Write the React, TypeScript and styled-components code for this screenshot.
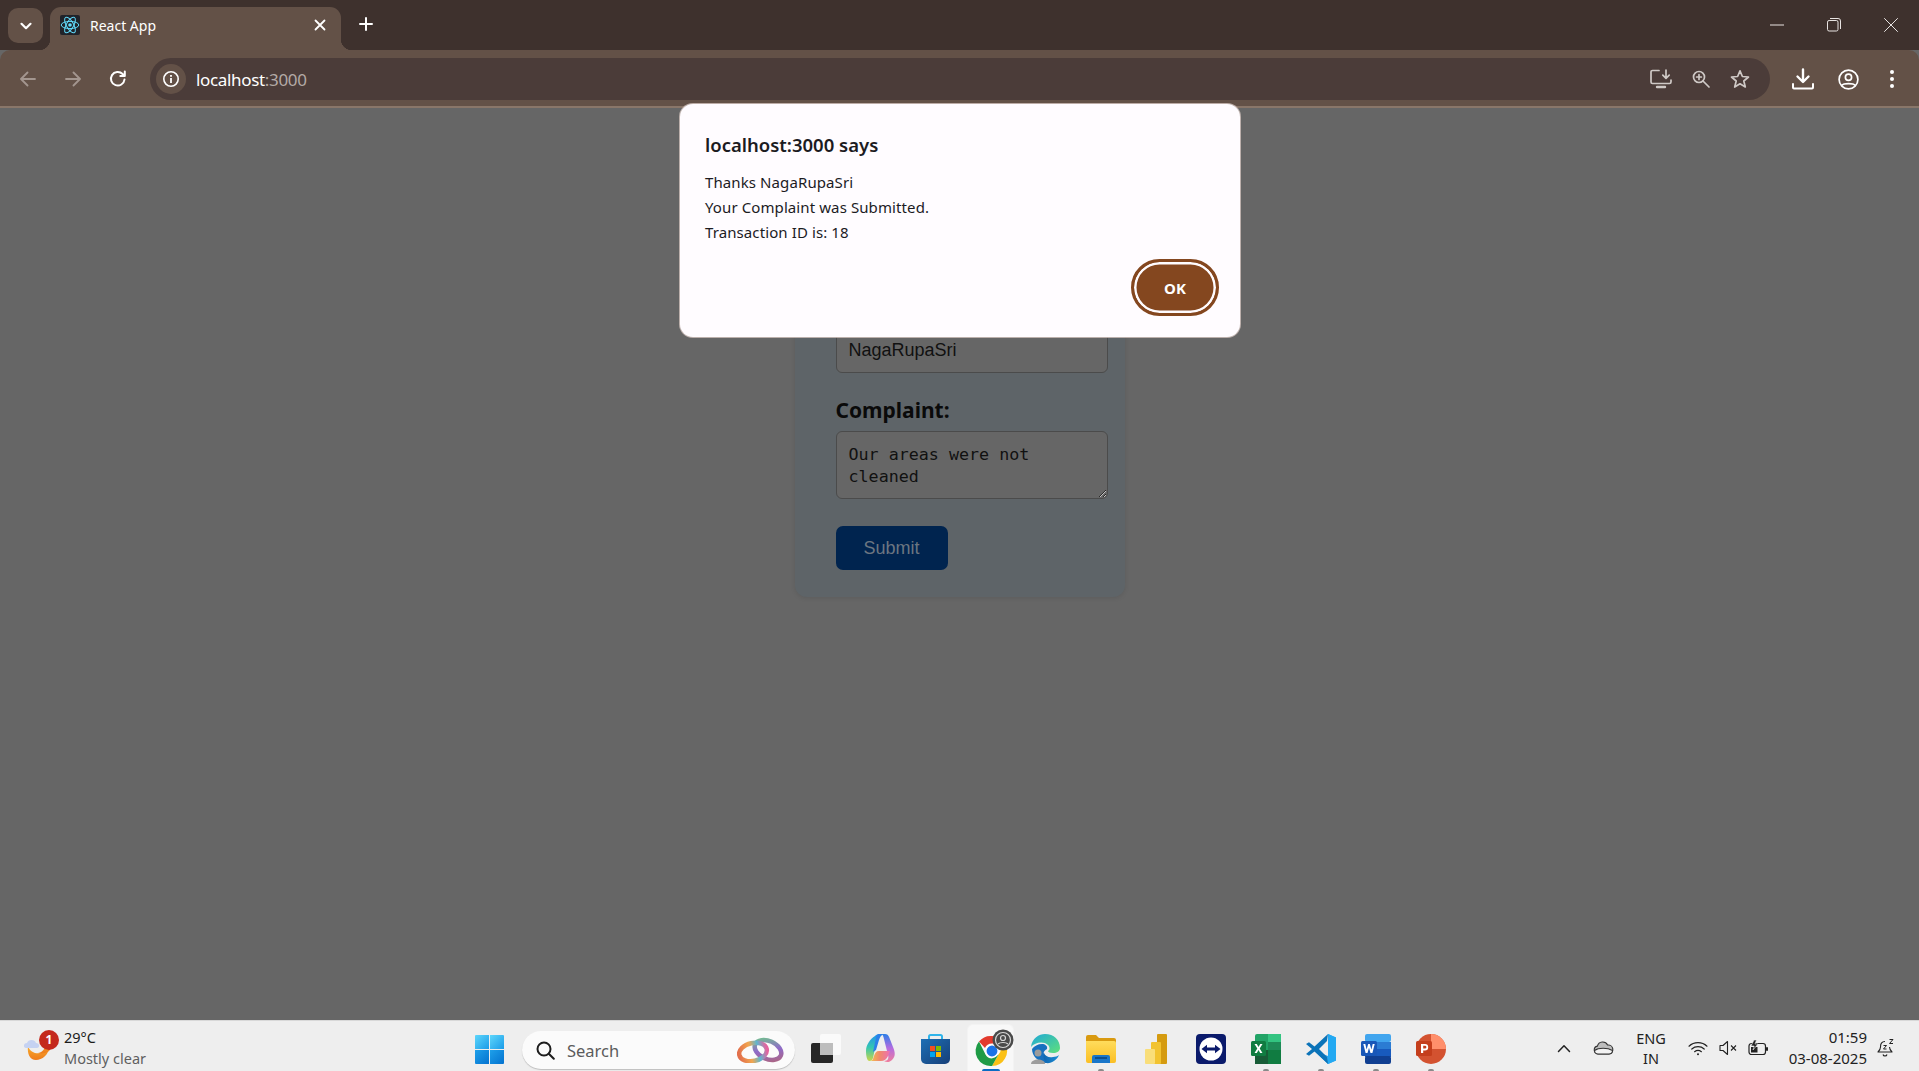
import React from "react";
import styled, { createGlobalStyle } from "styled-components";

const Global = createGlobalStyle`
  html, body { margin: 0; padding: 0; background: #666; overflow: hidden; }
  * { box-sizing: border-box; }
`;

const UI = `"Noto Sans", "Open Sans", sans-serif`;

const Page = styled.div`
  position: relative;
  width: 1919px;
  height: 1071px;
  display: flex;
  flex-direction: column;
  overflow: hidden;
  font-family: ${UI};
`;

/* ---------- browser chrome ---------- */
const TabStrip = styled.div`
  height: 50px;
  flex: none;
  background: #3e312d;
  display: flex;
  align-items: flex-start;
  padding: 7px 0 0 8px;
  color: #fff;
`;
const TabSearch = styled.div`
  width: 35px;
  height: 35px;
  margin-top: 1px;
  border-radius: 10px;
  background: #635147;
  display: flex;
  align-items: center;
  justify-content: center;
`;
const Tab = styled.div`
  position: relative;
  width: 291px;
  height: 43px;
  margin-left: 7px;
  padding: 0 15px 7px 10px;
  background: #635147;
  border-radius: 11px 11px 0 0;
  display: flex;
  align-items: center;
  gap: 10px;
  &::before, &::after {
    content: "";
    position: absolute;
    bottom: 0;
    width: 11px;
    height: 11px;
  }
  &::before { left: -11px; background: radial-gradient(circle at 0 0, transparent 11px, #635147 11.5px); }
  &::after { right: -11px; background: radial-gradient(circle at 100% 0, transparent 11px, #635147 11.5px); }
`;
const TabTitle = styled.span`
  flex: 1;
  font-size: 14px;
  color: #fff;
`;
const NewTab = styled.div`
  margin: 4px 0 0 13px;
  width: 24px;
  height: 26px;
  display: flex;
  align-items: center;
  justify-content: center;
`;
const WindowControls = styled.div`
  margin-left: auto;
  display: flex;
  height: 36px;
  align-items: center;
`;
const WinButton = styled.div`
  width: 57px;
  display: flex;
  justify-content: center;
`;
const Toolbar = styled.div`
  height: 58px;
  flex: none;
  background: #635147;
  border-bottom: 2px solid #897669;
  border-radius: 10px 10px 0 0;
  display: flex;
  align-items: flex-start;
  padding-top: 8px;
`;
const NavButton = styled.div<{ $w?: number }>`
  width: ${(p) => p.$w ?? 45}px;
  height: 42px;
  display: flex;
  align-items: center;
  justify-content: center;
`;
const NavGroup = styled.div`
  display: flex;
  width: 150px;
  padding-left: 5px;
`;
const Omnibox = styled.div`
  width: 1620px;
  height: 42px;
  border-radius: 21px;
  background: #4b3c39;
  display: flex;
  align-items: center;
  padding: 0 20px 0 6px;
`;
const InfoChip = styled.div`
  width: 30px;
  height: 30px;
  border-radius: 50%;
  background: #635147;
  display: flex;
  align-items: center;
  justify-content: center;
`;
const Url = styled.div`
  margin-left: 10px;
  flex: 1;
  font-size: 17px;
  letter-spacing: -0.33px;
  color: #fff;
  span { color: #b3aaa6; }
`;
const OmniIcons = styled.div`
  display: flex;
  align-items: center;
  gap: 20px;
`;
const ToolIcons = styled.div`
  display: flex;
  align-items: center;
  margin-left: 9px;
`;

/* ---------- page content ---------- */
const Main = styled.main`
  flex: 1;
  background: #666666;
  display: flex;
  justify-content: center;
  align-items: flex-start;
  padding-top: 164px;
`;
const Card = styled.form`
  width: 330px;
  padding: 21px 17px 27px 41px;
  background: #5e6468;
  border-radius: 12px;
  box-shadow: 0 1px 5px rgba(0, 0, 0, 0.1);
  display: flex;
  flex-direction: column;
  align-items: flex-start;
`;
const Field = styled.div<{ $mb: number }>`
  width: 100%;
  display: flex;
  flex-direction: column;
  gap: 8px;
  margin-bottom: ${(p) => p.$mb}px;
`;
const Label = styled.label`
  height: 26px;
  line-height: 26px;
  font-size: 21px;
  font-weight: 700;
  color: #0a0a0a;
`;
const TextInput = styled.input`
  width: 100%;
  height: 46px;
  padding: 0 12px;
  border: 1px solid #4b4b4b;
  border-radius: 6px;
  background: #666666;
  color: #111;
  font: 18px "Liberation Sans", Arial, sans-serif;
  outline: none;
`;
const TextArea = styled.textarea`
  width: 100%;
  height: 68px;
  padding: 11px 11px 10px 12px;
  border: 1px solid #4b4b4b;
  border-radius: 6px;
  background: #666666;
  color: #111;
  font: 16.7px/22px "DejaVu Sans Mono", monospace;
  outline: none;
  display: block;
`;
const Submit = styled.button`
  width: 112px;
  height: 44px;
  margin-top: -1px;
  border: 0;
  border-radius: 7px;
  background: #00244f;
  color: #6c7681;
  font: 18px "Liberation Sans", Arial, sans-serif;
`;

/* ---------- alert dialog ---------- */
const Dialog = styled.div`
  position: absolute;
  left: 680px;
  top: 104px;
  width: 560px;
  height: 233px;
  padding: 26px 21px 21px 25px;
  background: #fffcff;
  border-radius: 13px;
  box-shadow: 0 0 0 1px rgba(210, 195, 190, 0.8);
  display: flex;
  flex-direction: column;
  color: #1c1b1f;
`;
const DialogTitle = styled.div`
  height: 30px;
  line-height: 30px;
  font-size: 18.5px;
  font-weight: 600;
`;
const DialogBody = styled.div`
  margin-top: 10px;
  font-size: 15px;
  line-height: 25px;
  letter-spacing: 0.1px;
`;
const DialogActions = styled.div`
  margin-top: auto;
  display: flex;
  justify-content: flex-end;
`;
const OkButton = styled.button`
  width: 88px;
  height: 57px;
  border-radius: 29px;
  border: 3px solid #84471f;
  padding: 0;
  background: #84471f;
  box-shadow: inset 0 0 0 2.5px #fffcff;
  color: #fff;
  font: 700 15px ${UI};
`;

/* ---------- taskbar ---------- */
const Taskbar = styled.footer`
  height: 51px;
  flex: none;
  background: #eeeeee;
  border-top: 1px solid #d8d8d8;
  display: flex;
  align-items: stretch;
  color: #1b1b1b;
`;
const Weather = styled.div`
  width: 462px;
  flex: none;
  display: flex;
  align-items: center;
  padding: 4px 0 0 24px;
  gap: 2px;
`;
const WeatherIcon = styled.div`
  position: relative;
  width: 38px;
  height: 34px;
`;
const Badge = styled.span`
  position: absolute;
  left: 15px;
  top: -1px;
  width: 20px;
  height: 20px;
  border-radius: 50%;
  background: #c4281c;
  color: #fff;
  font-size: 12px;
  font-weight: 700;
  line-height: 20px;
  text-align: center;
`;
const WeatherText = styled.div`
  font-size: 14.5px;
  line-height: 21px;
  small { display: block; font-size: 14.5px; color: #5f5f5f; }
`;
const Tile = styled.div<{ $active?: boolean; $dot?: boolean }>`
  position: relative;
  width: 55px;
  flex: none;
  padding-top: 6px;
  display: flex;
  align-items: center;
  justify-content: center;
  &::before {
    content: "";
    display: ${(p) => (p.$active ? "block" : "none")};
    position: absolute;
    left: 5px;
    right: 5px;
    top: 4px;
    bottom: 0;
    background: #f8f8f8;
    border-radius: 5px 5px 0 0;
    box-shadow: 0 0 0 1px #f3f3f3;
  }
  &::after {
    content: "";
    display: ${(p) => (p.$active || p.$dot ? "block" : "none")};
    position: absolute;
    bottom: 0;
    left: 50%;
    transform: translateX(-50%);
    width: ${(p) => (p.$active ? 18 : 6)}px;
    height: 2px;
    border-radius: 2px 2px 0 0;
    background: ${(p) => (p.$active ? "#0a6cc4" : "#8a8a8a")};
  }
  svg { position: relative; z-index: 1; }
`;
const SearchBox = styled.div`
  width: 273px;
  height: 38px;
  flex: none;
  margin: 10px 3px 0 5px;
  border-radius: 19px;
  background: #fbfbfb;
  box-shadow: 0 1px 1px rgba(0, 0, 0, 0.2);
  display: flex;
  align-items: center;
  padding: 0 10px 0 14px;
  font-size: 16.5px;
  color: #5c5c5c;
  gap: 12px;
`;
const SearchText = styled.span`
  flex: 1;
`;
const Tray = styled.div`
  margin-left: auto;
  display: flex;
  align-items: center;
  padding: 4px 14px 0 0;
`;
const TrayItem = styled.div<{ $w: number }>`
  width: ${(p) => p.$w}px;
  display: flex;
  justify-content: center;
  align-items: center;
`;
const Lang = styled.div`
  font-size: 14.5px;
  line-height: 20px;
  text-align: center;
  color: #222;
`;
const Clock = styled.div`
  width: 90px;
  font-size: 15px;
  line-height: 21px;
  text-align: right;
  color: #222;
`;

/* ---------- drawings ---------- */
const Chevron = () => (
  <svg width="14" height="14" viewBox="0 0 14 14" fill="none" stroke="#fff" strokeWidth="2.2" strokeLinecap="round" strokeLinejoin="round"><path d="M2.5 4.8 7 9.2l4.5-4.4" /></svg>
);
const Favicon = () => (
  <svg width="20" height="20" viewBox="0 0 20 20">
    <rect width="20" height="20" rx="2" fill="#20232a" />
    <g fill="none" stroke="#61dafb" strokeWidth="1">
      <ellipse cx="10" cy="10" rx="8.8" ry="3.6" />
      <ellipse cx="10" cy="10" rx="8.8" ry="3.6" transform="rotate(60 10 10)" />
      <ellipse cx="10" cy="10" rx="8.8" ry="3.6" transform="rotate(120 10 10)" />
    </g>
    <circle cx="10" cy="10" r="1.8" fill="#61dafb" />
  </svg>
);
const Line = ({ d, w = 16, h = 16, c = "#fff", sw = 1.8, vb }: { d: string; w?: number; h?: number; c?: string; sw?: number; vb?: string }) => (
  <svg width={w} height={h} viewBox={vb ?? `0 0 ${w} ${h}`} fill="none" stroke={c} strokeWidth={sw} strokeLinecap="round" strokeLinejoin="round"><path d={d} /></svg>
);
const Restore = () => (
  <svg width="14" height="14" viewBox="0 0 14 14" fill="none" stroke="#e8e4e2" strokeWidth="1"><rect x="0.5" y="2.5" width="10.5" height="10.5" rx="1.6" /><path d="M3 .5h8a2.4 2.4 0 0 1 2.5 2.5v8" /></svg>
);
const Info = () => (
  <svg width="18" height="18" viewBox="0 0 18 18"><circle cx="9" cy="9" r="7.2" fill="none" stroke="#fff" strokeWidth="1.6" /><rect x="8.1" y="8" width="1.8" height="5" fill="#fff" /><rect x="8.1" y="5" width="1.8" height="1.8" fill="#fff" /></svg>
);
const InstallIcon = () => (
  <svg width="22" height="20" viewBox="0 0 22 20" fill="none" stroke="#cfc9c6" strokeWidth="1.7" strokeLinecap="round" strokeLinejoin="round">
    <path d="M9 1.5H2.5A1.5 1.5 0 0 0 1 3v10a1.5 1.5 0 0 0 1.5 1.5h17A1.5 1.5 0 0 0 21 13v-2" />
    <path d="M7 18h8" strokeWidth="2.4" /><path d="M16 1v8M12.8 6.2 16 9.4l3.2-3.2" />
  </svg>
);
const ZoomIcon = () => (
  <svg width="18" height="18" viewBox="0 0 18 18" fill="none" stroke="#cfc9c6" strokeWidth="1.7" strokeLinecap="round"><circle cx="7" cy="7" r="5.5" /><path d="M11 11l6 6M7 4.6v4.8M4.6 7h4.8" /></svg>
);
const StarIcon = () => (
  <svg width="20" height="20" viewBox="0 0 20 20" fill="none" stroke="#cfc9c6" strokeWidth="1.7" strokeLinejoin="round"><path d="M10 1.8l2.4 5.7 6.1.5-4.7 4 1.5 6L10 14.8 4.7 18l1.5-6-4.7-4 6.1-.5z" /></svg>
);
const DownloadIcon = () => (
  <svg width="22" height="22" viewBox="0 0 22 22" fill="none" stroke="#fff" strokeWidth="2" strokeLinecap="round" strokeLinejoin="round"><path d="M11 1.5v12M5.5 8.5l5.5 5.500 5.500-5.500" strokeWidth="2.4" /><path d="M1 16v3.4a1 1 0 0 0 1 1h18a1 1 0 0 0 1-1V16" /></svg>
);
const ProfileIcon = () => (
  <svg width="21" height="21" viewBox="0 0 21 21" fill="none" stroke="#fff" strokeWidth="1.7"><circle cx="10.5" cy="10.5" r="9.4" /><circle cx="10.5" cy="8.2" r="3.1" /><path d="M3.8 16.5c2-2.4 11.4-2.4 13.4 0" /></svg>
);
const MenuIcon = () => (
  <svg width="6" height="20" viewBox="0 0 6 20" fill="#fff"><circle cx="3" cy="3" r="2" /><circle cx="3" cy="10" r="2" /><circle cx="3" cy="17" r="2" /></svg>
);

const MoonCloud = () => (
  <svg width="30" height="30" viewBox="0 0 30 30">
    <defs><linearGradient id="mn" x1="0" y1="0" x2="0" y2="1"><stop offset="0" stopColor="#f9b12e" /><stop offset="1" stopColor="#ee7b1b" /></linearGradient></defs>
    <path d="M4 15c2 7 10 9 16 6 3-1.500 5-4 6-7-1 10-8 15-14 15S3 23 4 15z" fill="url(#mn)" />
    <path d="M21 9c6 2 6 8 5 10-4 4-9 4-12 3 6-1 9-7 7-13z" fill="url(#mn)" />
    <path d="M2 17c-3 0-3-5 1-5 1-4 8-4 9 0 4 0 4 5 1 5z" fill="#c5d2f2" />
  </svg>
);
const WinLogo = () => (
  <svg width="29" height="29" viewBox="0 0 29 29">
    <defs>
      <linearGradient id="wa" x1="0" y1="0" x2="1" y2="1"><stop offset="0" stopColor="#5dd6fb" /><stop offset="1" stopColor="#1a9be8" /></linearGradient>
      <linearGradient id="wb" x1="0" y1="0" x2="1" y2="1"><stop offset="0" stopColor="#1ea0ea" /><stop offset="1" stopColor="#0472cf" /></linearGradient>
    </defs>
    <path d="M1 0h13v14H0V1a1 1 0 0 1 1-1z" fill="url(#wa)" /><path d="M15 0h13a1 1 0 0 1 1 1v13H15z" fill="url(#wa)" />
    <path d="M0 15h14v14H1a1 1 0 0 1-1-1z" fill="url(#wb)" /><path d="M15 15h14v13a1 1 0 0 1-1 1H15z" fill="url(#wb)" />
  </svg>
);
const SearchGlass = () => (
  <svg width="19" height="19" viewBox="0 0 19 19" fill="none" stroke="#1d1d1d" strokeWidth="2" strokeLinecap="round"><circle cx="8" cy="8" r="6.5" /><path d="M12.8 12.8l5 5" /></svg>
);
const Rings = () => (
  <svg width="48" height="26" viewBox="0 0 48 26" fill="none" strokeWidth="4.5">
    <defs>
      <linearGradient id="r1" x1="0" y1="0" x2="1" y2="0"><stop offset="0" stopColor="#e2704c" /><stop offset=".4" stopColor="#f2a64f" /><stop offset=".7" stopColor="#5fb6cf" /><stop offset="1" stopColor="#e3639f" /></linearGradient>
      <linearGradient id="r2" x1="0" y1="0" x2="1" y2="1"><stop offset="0" stopColor="#6fc98a" /><stop offset=".5" stopColor="#8f6bc9" /><stop offset="1" stopColor="#b0657a" /></linearGradient>
    </defs>
    <ellipse cx="31" cy="13" rx="14" ry="9" transform="rotate(24 31 13)" stroke="url(#r2)" />
    <ellipse cx="16" cy="15" rx="14" ry="9" transform="rotate(-12 16 15)" stroke="url(#r1)" />
  </svg>
);
const TaskView = () => (
  <svg width="30" height="30" viewBox="0 0 30 30">
    <rect x="9" y="0" width="21" height="21" rx="2" fill="#fafafa" />
    <rect x="0" y="9" width="22" height="20" rx="2" fill="#272727" />
    <rect x="9" y="9" width="13" height="12" fill="#bdbdbd" />
  </svg>
);
const Copilot = () => (
  <svg width="30" height="30" viewBox="0 0 30 30">
    <defs>
      <linearGradient id="c1" x1="0" y1="0" x2="0" y2="1"><stop offset="0" stopColor="#1f8ef0" /><stop offset=".5" stopColor="#35c7b0" /><stop offset="1" stopColor="#c9d64a" /></linearGradient>
      <linearGradient id="c2" x1="0" y1="0" x2="1" y2="0"><stop offset="0" stopColor="#f3c94a" /><stop offset=".5" stopColor="#f08a6a" /><stop offset="1" stopColor="#ee6fb4" /></linearGradient>
      <linearGradient id="c3" x1="0" y1="0" x2="0" y2="1"><stop offset="0" stopColor="#2c7fe8" /><stop offset=".5" stopColor="#b36be0" /><stop offset="1" stopColor="#f07e9c" /></linearGradient>
    </defs>
    <path d="M16 0h3c2 0 3.500 1 4.300 3.500L27 13c2 5 3 9-1 13-2 2-5 3-8 1 4 0 5-3 4-6L18 5c-.5-2-1-4-2-5z" fill="url(#c3)" />
    <path d="M3 27h12c3 0 6-2 7-5l2-5H13c-3 0-4 2-5 5l-1 3c-.5 1.500-2 2-4 2z" fill="url(#c2)" />
    <path d="M9 2c1-1 2-2 4-2h6l-2 0c-3 0-5 2-6 5L7 24c-.5 2-2 3-3.500 3C1 27 0 22 0 17 0 11 4 5 9 2z" fill="url(#c1)" />
    <path d="M13 0h5c-3 1-4 3-5 6l-3 10-3 2 3-14c.5-2 1.500-4 3-4z" fill="#2c7fe8" />
  </svg>
);
const Store = () => (
  <svg width="29" height="30" viewBox="0 0 29 30">
    <defs><linearGradient id="st" x1="0" y1="0" x2="1" y2="1"><stop offset="0" stopColor="#1d6fb5" /><stop offset="1" stopColor="#173f78" /></linearGradient></defs>
    <path d="M8 5V2.500A1.500 1.500 0 0 1 9.500 1h10A1.500 1.500 0 0 1 21 2.500V5" fill="none" stroke="#2fb4ea" strokeWidth="2" />
    <path d="M0 5h29v20a5 5 0 0 1-5 5H5a5 5 0 0 1-5-5z" fill="url(#st)" />
    <rect x="9" y="12" width="5" height="5" fill="#f25022" /><rect x="15" y="12" width="5" height="5" fill="#7fba00" />
    <rect x="9" y="18" width="5" height="5" fill="#00a4ef" /><rect x="15" y="18" width="5" height="5" fill="#ffb900" />
  </svg>
);
const Chrome = () => (
  <svg width="46" height="40" viewBox="0 0 46 40">
    <g transform="translate(9 7)">
      <path d="M15 0a15 15 0 0 1 13 7.500H15a7.500 7.500 0 0 0-7 4.500L2 5.500A15 15 0 0 1 15 0z" fill="#e33b2e" />
      <path d="M28 7.500A15 15 0 0 1 15 30l6.500-11.500a7.500 7.500 0 0 0 0-11z" fill="#fbc116" />
      <path d="M2 5.500 8.500 18.500A7.500 7.500 0 0 0 15 22.500l6.500-4L15 30A15 15 0 0 1 2 5.500z" fill="#1f9b46" />
      <circle cx="15" cy="15" r="6.200" fill="#1a73e8" stroke="#fff" strokeWidth="1.500" />
    </g>
    <circle cx="35" cy="11" r="10.500" fill="#4a4a4a" />
    <circle cx="35" cy="11" r="7.500" fill="none" stroke="#d8d8d8" strokeWidth="1.200" />
    <circle cx="35" cy="9" r="2.500" fill="none" stroke="#d8d8d8" strokeWidth="1.200" />
    <path d="M30 15c2-2 8-2 10 0" fill="none" stroke="#d8d8d8" strokeWidth="1.200" />
  </svg>
);
const Edge = () => (
  <svg width="32" height="32" viewBox="0 0 32 32">
    <defs>
      <linearGradient id="e1" x1="0" y1="0" x2="1" y2="1"><stop offset="0" stopColor="#1fa9d8" /><stop offset="1" stopColor="#5fe07a" /></linearGradient>
      <linearGradient id="e2" x1="0" y1="0" x2="1" y2="0"><stop offset="0" stopColor="#0c59a4" /><stop offset="1" stopColor="#1b8fd6" /></linearGradient>
    </defs>
    <path d="M1 14C2 5 9 1 15 1c9 0 15 6 15 14 0 3-3 5-7 5-3 0-5-1-5-2 2-1 2-4 0-6-4-4-13-3-17 2z" fill="url(#e1)" />
    <path d="M14 20c1 3 5 5 9 4 2 0 5-1 6-2-2 5-8 9-13 8-3 0-5-2-7-4z" fill="url(#e2)" />
    <path d="M12 11c3 0 6 2 5 5-2 1-4 3-3 5-1 3 0 6 2 8-8 0-14-6-14-13 2-3 6-5 10-5z" fill="#1771bf" />
    <circle cx="8" cy="20" r="3.500" fill="#9c9c9c" /><path d="M1 31c0-6 14-6 14 0z" fill="#9c9c9c" />
  </svg>
);
const Folder = () => (
  <svg width="30" height="28" viewBox="0 0 30 28">
    <defs><linearGradient id="ff" x1="0" y1="0" x2="0" y2="1"><stop offset="0" stopColor="#ffdc5c" /><stop offset="1" stopColor="#fbbf24" /></linearGradient></defs>
    <path d="M0 2a2 2 0 0 1 2-2h8l3 3h15a2 2 0 0 1 2 2v6H0z" fill="#d99a10" />
    <path d="M0 6h28a2 2 0 0 1 2 2v18a2 2 0 0 1-2 2H2a2 2 0 0 1-2-2z" fill="url(#ff)" />
    <path d="M6 28v-6a2 2 0 0 1 2-2h14a2 2 0 0 1 2 2v6z" fill="#1976c9" /><rect x="9" y="22" width="12" height="2" fill="#0d4f8f" />
  </svg>
);
const PowerBI = () => (
  <svg width="22" height="30" viewBox="0 0 22 30">
    <rect x="12" y="0" width="10" height="30" rx="1" fill="#d59b10" />
    <rect x="6" y="8" width="10" height="22" rx="1" fill="#f2c330" />
    <rect x="0" y="15" width="10" height="15" rx="1" fill="#f9de7a" />
  </svg>
);
const TeamViewer = () => (
  <svg width="30" height="30" viewBox="0 0 30 30">
    <rect width="30" height="30" rx="4" fill="#0a1a6b" />
    <circle cx="15" cy="15" r="11.500" fill="#fff" />
    <path d="M5.500 15 11 10.800v2.700h8v-2.700l5.500 4.200-5.500 4.200v-2.700h-8v2.700z" fill="#0a1a6b" />
  </svg>
);
const Excel = () => (
  <svg width="30" height="30" viewBox="0 0 30 30">
    <rect x="4" y="0" width="26" height="30" rx="2" fill="#21a366" />
    <rect x="17" y="0" width="13" height="8" fill="#33c481" /><rect x="4" y="8" width="13" height="8" fill="#21a366" /><rect x="17" y="8" width="13" height="8" fill="#1e8a57" />
    <rect x="4" y="16" width="13" height="14" fill="#185c37" /><rect x="17" y="16" width="13" height="14" fill="#107c41" />
    <rect x="0" y="7" width="15" height="15" rx="1.500" fill="#107c41" />
    <path d="M3.500 10h2.300l1.700 3 1.700-3h2.300l-2.800 4.500 2.800 4.500H9.200l-1.700-3-1.700 3H3.500l2.800-4.500z" fill="#fff" />
  </svg>
);
const VSCode = () => (
  <svg width="30" height="30" viewBox="0 0 30 30">
    <path d="M22 0l8 3.500v23L22 30 8 16.500 22 22V8z" fill="#2ba5ec" />
    <path d="M22 0 8.500 12.500 3 8.300 0 10l6 5-6 5 3 1.700 5.500-4.200L22 30l-1-7-8-8 8-8z" fill="#0b73b8" />
    <path d="M22 0v30l8-3.500v-23z" fill="#23a9f2" />
  </svg>
);
const Word = () => (
  <svg width="30" height="30" viewBox="0 0 30 30">
    <rect x="4" y="0" width="26" height="8" rx="2" fill="#41a5ee" /><rect x="4" y="8" width="26" height="7" fill="#2b7cd3" />
    <rect x="4" y="15" width="26" height="8" fill="#185abd" /><rect x="4" y="22" width="26" height="8" rx="2" fill="#103f91" />
    <rect x="0" y="7" width="16" height="15" rx="1.500" fill="#1857b8" />
    <path d="M2.300 10h2l1.300 5.500L7.200 10h1.600l1.600 5.500 1.300-5.500h2L11.400 19H9.500L8 13.800 6.500 19H4.600z" fill="#fff" />
  </svg>
);
const PowerPoint = () => (
  <svg width="30" height="30" viewBox="0 0 30 30">
    <circle cx="15" cy="15" r="15" fill="#d35230" />
    <path d="M15 0a15 15 0 0 1 15 15H15z" fill="#ff8f6b" />
    <rect x="0" y="7" width="16" height="15" rx="1.500" fill="#c43e1c" />
    <path d="M5 10h4a3.200 3.200 0 0 1 0 6.400H7.200V19H5zM7.200 11.800v2.800H9a1.400 1.400 0 0 0 0-2.800z" fill="#fff" />
  </svg>
);
const TrayUp = () => <Line w={14} h={9} c="#222" sw={1.5} d="M1.500 7.500 7 1.800l5.500 5.700" />;
const TrayCloud = () => (
  <svg width="21" height="14" viewBox="0 0 21 14"><path d="M5 13a4 4 0 0 1-.6-7.900A5.500 5.500 0 0 1 14.600 4 4.500 4.500 0 0 1 16 13z" fill="#bdbdbd" stroke="#333" strokeWidth="1.100" /><path d="M1.500 9.500c4-3 13-3 18 0 0 2-1.500 3.500-3.500 3.500H5a3.500 3.500 0 0 1-3.500-3.500z" fill="#f3f3f3" stroke="#333" strokeWidth="1.100" /></svg>
);
const Wifi = () => (
  <svg width="20" height="15" viewBox="0 0 20 15" fill="none" stroke="#222" strokeWidth="1.200" strokeLinecap="round"><path d="M1 5.200c5-4.700 13-4.700 18 0M3.800 8c3.500-3.100 9-3.100 12.400 0M6.600 10.700c2-1.500 4.800-1.500 6.800 0" /><circle cx="10" cy="13.200" r="1" fill="#222" stroke="none" /></svg>
);
const Mute = () => (
  <svg width="19" height="16" viewBox="0 0 19 16" fill="none" stroke="#222" strokeWidth="1.100" strokeLinejoin="round"><path d="M1 5.500v5h3l4.500 4V1.500L4 5.500z" /><path d="M12 5.500l5 5M17 5.500l-5 5" /></svg>
);
const Battery = () => (
  <svg width="21" height="16" viewBox="0 0 21 16"><rect x="1" y="3.500" width="16.500" height="11" rx="2.500" fill="none" stroke="#222" strokeWidth="1.200" /><rect x="18" y="7" width="2" height="4" rx="1" fill="#222" /><rect x="3" y="7" width="6.500" height="5.500" fill="#222" /><path d="M6 0 3 6h3.200L5 10l5-6H7l1.500-4z" fill="#222" stroke="#eee" strokeWidth=".6" /></svg>
);
const BellZ = () => (
  <svg width="18" height="20" viewBox="0 0 18 20" fill="none" stroke="#222" strokeWidth="1.100" strokeLinejoin="round">
    <path d="M8 3.500C4.500 3.500 3.500 6 3.500 9c0 2.500-1 3.500-2.500 5h14c-1.500-1.500-2.500-2.500-2.500-5" /><path d="M6 16.500c.5 2 3.500 2 4 0" />
    <path d="M6.500 7.500h3l-3 3.500h3M12.500 1.500h3.500l-3.500 4h3.500" strokeWidth="1" />
  </svg>
);

export default function App() {
  return (
    <Page>
      <Global />
      <TabStrip>
        <TabSearch><Chevron /></TabSearch>
        <Tab>
          <Favicon />
          <TabTitle>React App</TabTitle>
          <Line w={12} h={12} sw={1.8} d="M1.500 1.500l9 9M10.500 1.500l-9 9" />
        </Tab>
        <NewTab><Line w={14} h={14} sw={2} d="M7 1v12M1 7h12" /></NewTab>
        <WindowControls>
          <WinButton><Line w={14} h={2} c="#e8e4e2" sw={1} d="M0 1h14" /></WinButton>
          <WinButton><Restore /></WinButton>
          <WinButton><Line w={14} h={14} c="#e8e4e2" sw={1} d="M.5.500l13 13M13.500.500l-13 13" /></WinButton>
        </WindowControls>
      </TabStrip>
      <Toolbar>
        <NavGroup>
          <NavButton><Line w={16} h={16} c="#a3968f" d="M15 8H1.500M7.500 1.500 1 8l6.500 6.500" /></NavButton>
          <NavButton><Line w={16} h={16} c="#a3968f" d="M1 8h13.500M8.500 1.500 15 8l-6.500 6.500" /></NavButton>
          <NavButton><Line w={18} h={18} sw={2} d="M15.500 9.500A6.800 6.800 0 1 1 13.600 4L15.800 6M15.800 1.500V6h-4.500" /></NavButton>
        </NavGroup>
        <Omnibox>
          <InfoChip><Info /></InfoChip>
          <Url>localhost<span>:3000</span></Url>
          <OmniIcons>
            <InstallIcon />
            <ZoomIcon />
            <StarIcon />
          </OmniIcons>
        </Omnibox>
        <ToolIcons>
          <NavButton $w={47}><DownloadIcon /></NavButton>
          <NavButton $w={44}><ProfileIcon /></NavButton>
          <NavButton $w={44}><MenuIcon /></NavButton>
        </ToolIcons>
      </Toolbar>
      <Main>
        <Card>
          <Field $mb={24}>
            <Label>Name:</Label>
            <TextInput readOnly defaultValue="NagaRupaSri" />
          </Field>
          <Field $mb={28}>
            <Label>Complaint:</Label>
            <TextArea readOnly defaultValue="Our areas were not cleaned" />
          </Field>
          <Submit type="button">Submit</Submit>
        </Card>
      </Main>
      <Taskbar>
        <Weather>
          <WeatherIcon>
            <MoonCloud />
            <Badge>1</Badge>
          </WeatherIcon>
          <WeatherText>29°C<small>Mostly clear</small></WeatherText>
        </Weather>
        <Tile><WinLogo /></Tile>
        <SearchBox>
          <SearchGlass />
          <SearchText>Search</SearchText>
          <Rings />
        </SearchBox>
        <Tile><TaskView /></Tile>
        <Tile><Copilot /></Tile>
        <Tile><Store /></Tile>
        <Tile $active><Chrome /></Tile>
        <Tile><Edge /></Tile>
        <Tile $dot><Folder /></Tile>
        <Tile><PowerBI /></Tile>
        <Tile><TeamViewer /></Tile>
        <Tile $dot><Excel /></Tile>
        <Tile $dot><VSCode /></Tile>
        <Tile $dot><Word /></Tile>
        <Tile $dot><PowerPoint /></Tile>
        <Tray>
          <TrayItem $w={38}><TrayUp /></TrayItem>
          <TrayItem $w={40}><TrayCloud /></TrayItem>
          <TrayItem $w={56}><Lang>ENG<br />IN</Lang></TrayItem>
          <TrayItem $w={38}><Wifi /></TrayItem>
          <TrayItem $w={22}><Mute /></TrayItem>
          <TrayItem $w={38}><Battery /></TrayItem>
          <Clock>01:59<br />03-08-2025</Clock>
          <TrayItem $w={38}><BellZ /></TrayItem>
        </Tray>
      </Taskbar>
      <Dialog>
        <DialogTitle>localhost:3000 says</DialogTitle>
        <DialogBody>
          Thanks NagaRupaSri<br />
          Your Complaint was Submitted.<br />
          Transaction ID is: 18
        </DialogBody>
        <DialogActions><OkButton type="button">OK</OkButton></DialogActions>
      </Dialog>
    </Page>
  );
}
